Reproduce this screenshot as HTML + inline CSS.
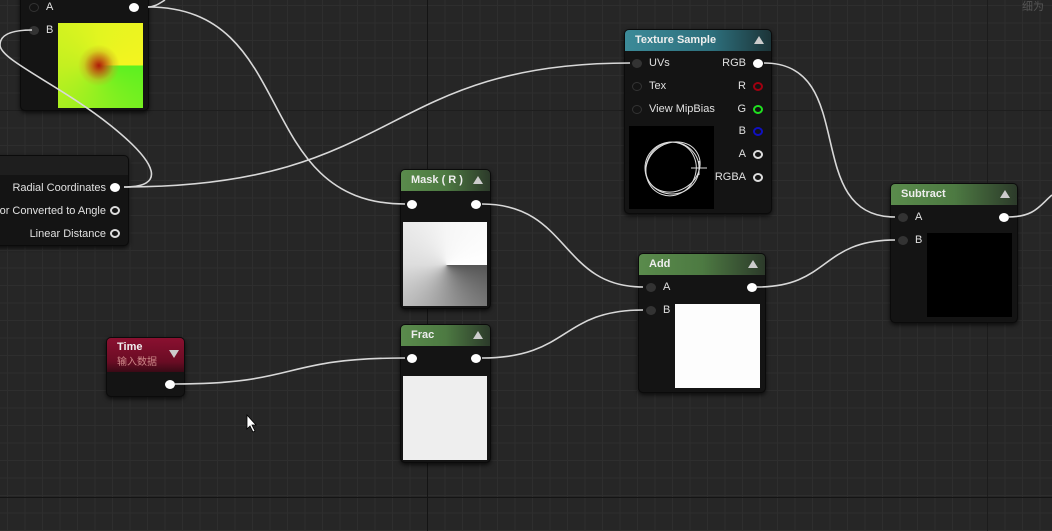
<!DOCTYPE html>
<html><head><meta charset="utf-8"><style>
*{margin:0;padding:0;box-sizing:border-box}
body{width:1052px;height:531px;overflow:hidden;background:#262626;font-family:"Liberation Sans","Noto Sans CJK SC",sans-serif;position:relative}
.grid{position:absolute;inset:0;background-image:linear-gradient(#2e2e2e 1px,transparent 1px),linear-gradient(90deg,#2e2e2e 1px,transparent 1px);background-size:17.5px 17.5px;background-position:7px 5px}
.maj{position:absolute;background:#141414}
.node{position:absolute;background:#141414;border-radius:5px;box-shadow:0 2px 4px rgba(0,0,0,.7);border:1px solid #0b0b0b}
.hd{position:absolute;left:0;right:0;top:0;height:21px;border-radius:4px 4px 0 0;color:#eee;font-size:11px;font-weight:bold;padding:4px 0 0 10px}
.g{background:linear-gradient(90deg,#5a8b4c 0%,#4d7a42 50%,#2c3a2a 100%)}
.tri{position:absolute;right:7px;top:6px;width:0;height:0;border-left:5px solid transparent;border-right:5px solid transparent;border-bottom:8px solid #ccc}
.t{position:absolute;color:#e0e0e0;font-size:11px;white-space:nowrap}
.pin{position:absolute;width:10px;height:9px;border-radius:50%;background:#fff}
.pe{position:absolute;width:10px;height:9px;border-radius:50%;background:#333}
.po{position:absolute;width:10px;height:9px;border-radius:50%;border:2px solid #ddd}
.pv{position:absolute}
</style></head><body>
<div class="grid"></div>
<div class="maj" style="left:427px;top:0;width:1px;height:531px"></div>
<div class="maj" style="left:987px;top:0;width:1px;height:531px;background:#1c1c1c"></div>
<div class="maj" style="left:0;top:497px;width:1052px;height:1px"></div>
<div class="maj" style="left:0;top:110px;width:1052px;height:1px;background:#1e1e1e"></div>
<div class="t" style="left:1022px;top:-2px;color:#555;font-size:11px">细为</div>

<!-- top-left node -->
<div class="node" style="left:20px;top:-10px;width:129px;height:121px">
<div class="pe" style="left:8px;top:12px;background:none;border:1px solid #333"></div><div class="t" style="left:25px;top:10px">A</div>
<div class="pin" style="left:108px;top:12px"></div>
<div class="pe" style="left:8px;top:35px"></div><div class="t" style="left:25px;top:33px">B</div>
<div class="pv" style="left:37px;top:32px;width:85px;height:85px;background:radial-gradient(circle at 48% 50%,#b01a08 0%,rgba(190,80,16,.85) 10%,rgba(200,160,30,.4) 24%,transparent 34%),conic-gradient(from 90deg at 48% 50%,#5cf020 0deg,#90f020 90deg,#c4f020 180deg,#e2f520 270deg,#f4f420 360deg)"></div>
</div>

<!-- radial node -->
<div class="node" style="left:-10px;top:155px;width:139px;height:91px">
<div class="hd" style="height:19px;background:#1e1e1e"></div>
<div class="t" style="right:22px;top:26px">Radial Coordinates</div><div class="pin" style="right:8px;top:27px"></div>
<div class="t" style="right:22px;top:49px">tor Converted to Angle</div><div class="po" style="right:8px;top:50px"></div>
<div class="t" style="right:22px;top:72px">Linear Distance</div><div class="po" style="right:8px;top:73px"></div>
</div>

<!-- Texture sample -->
<div class="node" style="left:624px;top:29px;width:148px;height:185px">
<div class="hd" style="background:linear-gradient(90deg,#3c8a98,#2d6f7c 60%,#1c3438)">Texture Sample</div><div class="tri"></div>
<div class="pe" style="left:7px;top:29px"></div><div class="t" style="left:24px;top:27px">UVs</div>
<div class="pe" style="left:7px;top:52px;background:none;border:1px solid #333"></div><div class="t" style="left:24px;top:50px">Tex</div>
<div class="pe" style="left:7px;top:75px;background:none;border:1px solid #333"></div><div class="t" style="left:24px;top:73px">View MipBias</div>
<div class="t" style="right:25px;top:27px">RGB</div><div class="pin" style="right:8px;top:29px"></div>
<div class="t" style="right:25px;top:50px">R</div><div class="po" style="right:8px;top:52px;border-color:#a00010"></div>
<div class="t" style="right:25px;top:73px">G</div><div class="po" style="right:8px;top:75px;border-color:#20e020"></div>
<div class="t" style="right:25px;top:95px">B</div><div class="po" style="right:8px;top:97px;border-color:#1010c0"></div>
<div class="t" style="right:25px;top:118px">A</div><div class="po" style="right:8px;top:120px"></div>
<div class="t" style="right:25px;top:141px">RGBA</div><div class="po" style="right:8px;top:143px"></div>
<div class="pv" style="left:4px;top:96px;width:85px;height:83px;background:#000">
<svg width="85" height="83"><g fill="none" stroke="#ddd" stroke-width="1"><ellipse cx="43" cy="42" rx="27" ry="26"/><ellipse cx="42" cy="43" rx="25" ry="27" transform="rotate(20 42 43)"/><ellipse cx="44" cy="41" rx="28" ry="24" transform="rotate(-30 44 41)"/><path d="M62 42H78M70 35V49"/></g></svg></div>
</div>

<!-- Mask -->
<div class="node" style="left:400px;top:169px;width:91px;height:140px">
<div class="hd g">Mask ( R )</div><div class="tri"></div>
<div class="pin" style="left:6px;top:30px"></div><div class="pin" style="left:70px;top:30px"></div>
<div class="pv" style="left:2px;top:52px;width:84px;height:84px;background:conic-gradient(from 90deg at 52% 51%,#555 0deg,#999 90deg,#ddd 180deg,#f6f6f6 270deg,#fff 360deg)"></div>
</div>

<!-- Frac -->
<div class="node" style="left:400px;top:324px;width:91px;height:139px">
<div class="hd g">Frac</div><div class="tri"></div>
<div class="pin" style="left:6px;top:29px"></div><div class="pin" style="left:70px;top:29px"></div>
<div class="pv" style="left:2px;top:51px;width:84px;height:84px;background:#eee"></div>
</div>

<!-- Add -->
<div class="node" style="left:638px;top:253px;width:128px;height:140px">
<div class="hd g">Add</div><div class="tri"></div>
<div class="pe" style="left:7px;top:29px"></div><div class="t" style="left:24px;top:27px">A</div>
<div class="pe" style="left:7px;top:52px"></div><div class="t" style="left:24px;top:50px">B</div>
<div class="pin" style="right:8px;top:29px"></div>
<div class="pv" style="left:36px;top:50px;width:85px;height:84px;background:#fdfdfd"></div>
</div>

<!-- Subtract -->
<div class="node" style="left:890px;top:183px;width:128px;height:140px">
<div class="hd g">Subtract</div><div class="tri"></div>
<div class="pe" style="left:7px;top:29px"></div><div class="t" style="left:24px;top:27px">A</div>
<div class="pe" style="left:7px;top:52px"></div><div class="t" style="left:24px;top:50px">B</div>
<div class="pin" style="right:8px;top:29px"></div>
<div class="pv" style="left:36px;top:49px;width:85px;height:84px;background:#000"></div>
</div>

<!-- Time -->
<div class="node" style="left:106px;top:337px;width:79px;height:60px">
<div class="hd" style="height:34px;background:linear-gradient(#8a1030,#6a0c24 70%,#3a0a16);padding-top:3px">Time<div style="font-weight:normal;color:#c88;font-size:10px">输入数据</div></div>
<div style="position:absolute;right:5px;top:12px;border-left:5px solid transparent;border-right:5px solid transparent;border-top:8px solid #ccc"></div>
<div class="pin" style="left:58px;top:42px"></div>
</div>

<svg style="position:absolute;left:0;top:0" width="1052" height="531"><g fill="none" stroke="#d8d8d8" stroke-width="1.6">
<path d="M175,384 C300,384 280,358 405,358"/>
<path d="M482,358 C570,358 560,310 643,310"/>
<path d="M482,204 C570,204 560,287 643,287"/>
<path d="M757,287 C830,287 820,240 895,240"/>
<path d="M764,63 C860,63 800,217 895,217"/>
<path d="M1008,217 C1035,217 1040,205 1052,195"/>
<path d="M124,187 C400,187 380,63 630,63"/>
<path d="M148,7 C300,7 250,204 405,204"/>
<path d="M148,7 C155,7 160,3 165,0"/>
<path d="M124,187 C165,187 160,165 110,125 S0,60 0,45 C0,33 15,30 32,30"/>
</g>
<path d="M247,415 v14 l3,-3 l3,6 l2,-1 l-3,-6 h4 z" fill="#fff" stroke="#000" stroke-width=".8"/>
</svg>
</body></html>
